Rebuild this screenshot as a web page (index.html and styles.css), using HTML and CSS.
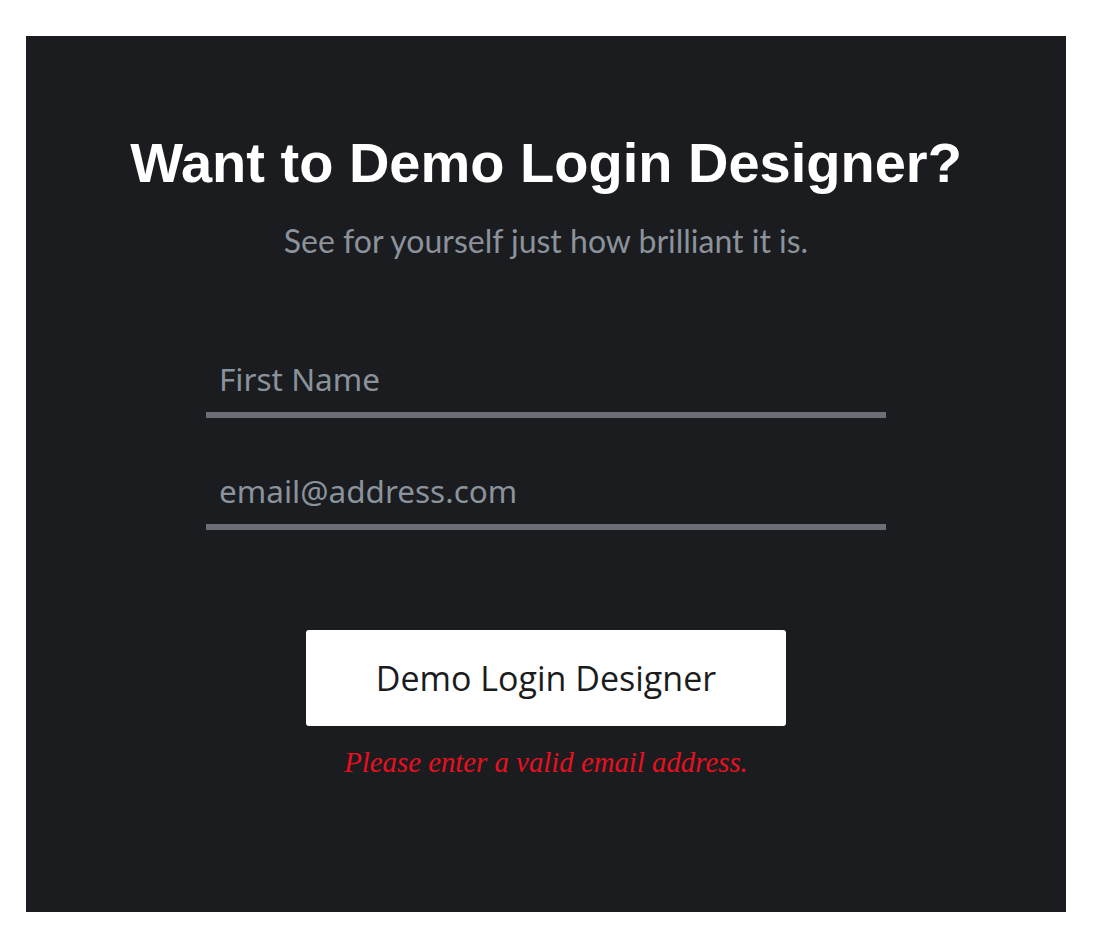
FILE: index.html
```html
<!DOCTYPE html>
<html>
<head>
<meta charset="utf-8">
<link rel="stylesheet" href="styles.css">
</head>
<body>
<section class="panel">
  <h1 class="title">Want to Demo Login Designer?</h1>
  <p class="subtitle">See for yourself just how brilliant it is.</p>
  <form class="form">
    <input class="field" type="text" placeholder="First Name">
    <input class="field" type="email" placeholder="email@address.com">
    <button class="btn" type="button">Demo Login Designer</button>
    <p class="error">Please enter a valid email address.</p>
  </form>
</section>
</body>
</html>
```
FILE: styles.css
```css
html, body { margin: 0; padding: 0; background: #ffffff; }
body { padding: 36px 32px 36px 26px; }
.panel {
  width: 1040px;
  height: 876px;
  box-sizing: border-box;
  background: #1a1c20;
  display: flex;
  flex-direction: column;
  align-items: center;
  padding-top: 97px;
}
.title {
  margin: 0;
  font-family: "Liberation Sans", Arial, sans-serif;
  font-weight: 700;
  font-size: 56px;
  line-height: 60px;
  color: #ffffff;
}
.subtitle {
  margin: 28px 0 0;
  font-family: Lato, sans-serif;
  font-size: 32px;
  line-height: 40px;
  color: #8b929a;
}
.form {
  margin-top: 95px;
  display: flex;
  flex-direction: column;
  align-items: center;
}
.field {
  width: 680px;
  height: 62px;
  box-sizing: border-box;
  background: transparent;
  border: none;
  border-bottom: 6px solid #6b6e74;
  padding: 0 13px 12px;
  font-family: "Noto Sans", sans-serif;
  font-size: 31.5px;
  color: #ffffff;
  outline: none;
  margin-bottom: 50px;
}
.field::placeholder { color: #8a939b; }
.btn {
  margin-top: 50px;
  width: 480px;
  height: 96px;
  border: none;
  border-radius: 3px;
  background: #ffffff;
  color: #1a1c20;
  font-family: "Open Sans", sans-serif;
  font-size: 34px;
}
.error {
  margin: 19px 0 0;
  font-family: "Liberation Serif", Georgia, serif;
  font-style: italic;
  font-size: 28.8px;
  line-height: 34px;
  color: #e8101e;
}
```
